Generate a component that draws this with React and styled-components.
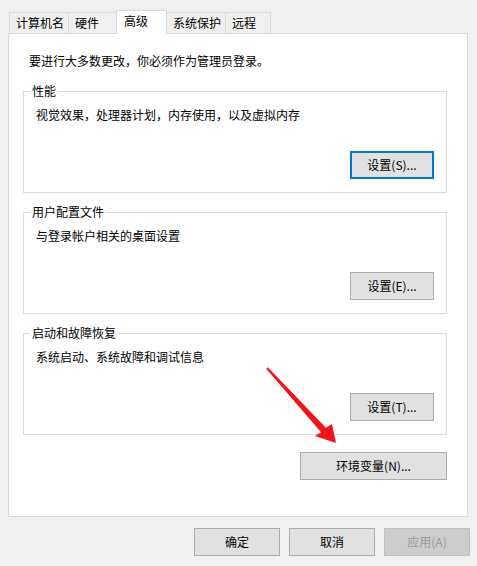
import React from "react";
import styled, { createGlobalStyle } from "styled-components";

const Global = createGlobalStyle`
  html, body { margin: 0; padding: 0; background: #f0f0f0; }
  body {
    font-family: "Noto Sans CJK SC", "Noto Sans", "Liberation Sans", sans-serif;
    font-size: 12px;
    color: #000;
  }
`;

const Page = styled.div`
  position: relative;
  width: 477px;
  height: 566px;
  box-sizing: border-box;
  padding: 10px 8px 0 8px;
  background: #f0f0f0;
`;

const TabBar = styled.div`
  display: flex;
  align-items: flex-end;
  height: 23px;
  padding-left: 1px;
`;

const Tab = styled.div`
  box-sizing: border-box;
  width: ${(p) => p.$w}px;
  height: ${(p) => (p.$active ? 24 : 21)}px;
  margin-right: -1px;
  margin-bottom: ${(p) => (p.$active ? -1 : 0)}px;
  position: relative;
  z-index: ${(p) => (p.$active ? 2 : 1)};
  display: flex;
  align-items: center;
  padding: 0 0 ${(p) => (p.$active ? 3 : 0)}px ${(p) => (p.$active ? 7 : 6)}px;
  border: 1px solid #d9d9d9;
  border-bottom: none;
  background: ${(p) => (p.$active ? "#ffffff" : "#f0f0f0")};
  line-height: 16px;
  white-space: nowrap;
`;

const Panel = styled.div`
  box-sizing: border-box;
  width: 460px;
  height: 484px;
  border: 1px solid #d9d9d9;
  background: #ffffff;
  padding: 19px 20px 0 14px;
  display: flex;
  flex-direction: column;
`;

const Note = styled.div`
  line-height: 16px;
  margin-left: 6px;
  margin-bottom: 14px;
`;

const Group = styled.fieldset`
  margin: ${(p) => (p.$first ? 0 : 11)}px 0 0 0;
  border: 1px solid #dcdcdc;
  padding: 8px 12px 13px 12px;
  display: flex;
  flex-direction: column;
  min-width: 0;
`;

const Legend = styled.legend`
  padding: 0 2px;
  margin-left: -6px;
  line-height: 16px;
`;

const Desc = styled.div`
  line-height: 16px;
`;

const ButtonRow = styled.div`
  display: flex;
  justify-content: flex-end;
  margin-top: ${(p) => p.$mt || 0}px;
`;

const Button = styled.button`
  box-sizing: border-box;
  width: ${(p) => p.$w || 84}px;
  height: 28px;
  padding: 0;
  margin: 0;
  font: inherit;
  font-size: 12px;
  line-height: 16px;
  color: ${(p) => (p.disabled ? "#9a9a9a" : "#000")};
  background: ${(p) => (p.disabled ? "#cccccc" : "#e1e1e1")};
  border: ${(p) =>
    p.$focused
      ? "2px solid #0078d7"
      : p.disabled
      ? "1px solid #bfbfbf"
      : "1px solid #adadad"};
  border-radius: 0;
  display: flex;
  align-items: center;
  justify-content: center;
`;

const Footer = styled.div`
  display: flex;
  justify-content: flex-end;
  gap: 9px;
  margin-top: 11px;
  margin-right: -1px;
`;

const ArrowSvg = styled.svg`
  position: absolute;
  left: 0;
  top: 0;
  pointer-events: none;
`;

const tabs = [
  { label: "计算机名", w: 60 },
  { label: "硬件", w: 49 },
  { label: "高级", w: 51, active: true },
  { label: "系统保护", w: 60 },
  { label: "远程", w: 46 },
];

const groups = [
  { legend: "性能", desc: "视觉效果，处理器计划，内存使用，以及虚拟内存", btn: "设置(S)...", focused: true },
  { legend: "用户配置文件", desc: "与登录帐户相关的桌面设置", btn: "设置(E)..." },
  { legend: "启动和故障恢复", desc: "系统启动、系统故障和调试信息", btn: "设置(T)..." },
];

export default function App() {
  return (
    <>
      <Global />
      <Page>
        <TabBar>
          {tabs.map((t) => (
            <Tab key={t.label} $w={t.w} $active={t.active}>
              {t.label}
            </Tab>
          ))}
        </TabBar>
        <Panel>
          <Note>要进行大多数更改，你必须作为管理员登录。</Note>
          {groups.map((g, i) => (
            <Group key={g.legend} $first={i === 0}>
              <Legend>{g.legend}</Legend>
              <Desc>{g.desc}</Desc>
              <ButtonRow $mt={28}>
                <Button $focused={g.focused}>{g.btn}</Button>
              </ButtonRow>
            </Group>
          ))}
          <ButtonRow $mt={17}>
            <Button $w={147}>环境变量(N)...</Button>
          </ButtonRow>
        </Panel>
        <Footer>
          <Button $w={86}>确定</Button>
          <Button $w={86}>取消</Button>
          <Button $w={86} disabled>
            应用(A)
          </Button>
        </Footer>
        <ArrowSvg width="477" height="566" viewBox="0 0 477 566">
          <polygon
            points="267.8,367.3 325.9,427.8 332,424 336,443 315,436 321.1,432.2 266.2,368.7"
            fill="#f2141a"
          />
        </ArrowSvg>
      </Page>
    </>
  );
}
